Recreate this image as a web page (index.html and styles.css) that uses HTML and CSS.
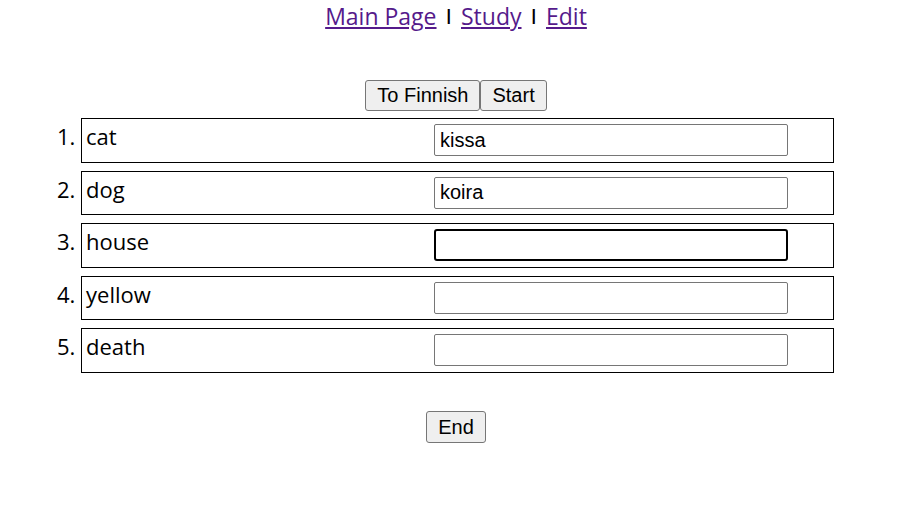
FILE: index.html
```html
<!DOCTYPE html>
<html>
<head>
<meta charset="utf-8">
<link rel="stylesheet" href="styles.css">
</head>
<body>
<nav class="nav">
  <a href="#" class="nav-link">Main Page</a>
  <span class="sep">|</span>
  <a href="#" class="nav-link">Study</a>
  <span class="sep">|</span>
  <a href="#" class="nav-link">Edit</a>
</nav>
<div class="controls">
  <button class="btn">To Finnish</button><button class="btn">Start</button>
</div>
<ol class="words">
  <li class="word"><div class="word-row"><span class="term">cat</span><input class="answer" type="text" value="kissa"></div></li>
  <li class="word"><div class="word-row"><span class="term">dog</span><input class="answer" type="text" value="koira"></div></li>
  <li class="word"><div class="word-row"><span class="term">house</span><input class="answer focused" type="text" value=""></div></li>
  <li class="word"><div class="word-row"><span class="term">yellow</span><input class="answer" type="text" value=""></div></li>
  <li class="word"><div class="word-row"><span class="term">death</span><input class="answer" type="text" value=""></div></li>
</ol>
<div class="footer">
  <button class="btn btn-end">End</button>
</div>
</body>
</html>
```
FILE: styles.css
```css
html, body {
  margin: 0;
  padding: 0;
  background: #fff;
}
body {
  font-family: "Open Sans", "Noto Sans", sans-serif;
  color: #000;
  width: 912px;
}
.nav {
  display: flex;
  justify-content: center;
  align-items: baseline;
  gap: 10px;
  height: 32px;
  line-height: 32px;
  font-size: 23px;
}
.nav-link {
  color: #551a8b;
  text-decoration: underline;
}
.sep {
  font-family: "Liberation Sans", sans-serif;
  font-size: 16px;
  font-weight: bold;
  line-height: 16px;
  align-self: center;
}
.controls {
  display: flex;
  justify-content: center;
  margin-top: 48px;
}
.btn {
  font-family: "Liberation Sans", Arial, sans-serif;
  font-size: 20px;
  color: #000;
  background: #efefef;
  border: 1px solid #767676;
  border-radius: 3px;
  padding: 1px 11px;
  height: 31px;
  margin: 0;
}
.words {
  list-style: decimal outside;
  margin: 7px 0 0 81px;
  padding: 0;
  width: 753px;
  font-size: 22px;
}
.word {
  border: 1px solid #000;
  height: 42.5px;
  margin-bottom: 8px;
  padding: 0 4px;
  line-height: 34px;
}
.word-row {
  display: grid;
  grid-template-columns: 348px 354px;
  align-items: start;
}
.term {
  line-height: 34px;
}
.answer {
  margin-top: 5px;
  height: 32px;
  box-sizing: border-box;
  border: 1px solid #767676;
  border-radius: 2px;
  font-family: "Liberation Sans", Arial, sans-serif;
  font-size: 20px;
  padding: 0 5px;
  color: #000;
}
.answer.focused {
  border: 2px solid #000;
  border-radius: 3px;
  outline: none;
}
.footer {
  display: flex;
  justify-content: center;
  margin-top: 38.5px;
}
.btn-end {
  height: 32px;
}
```
